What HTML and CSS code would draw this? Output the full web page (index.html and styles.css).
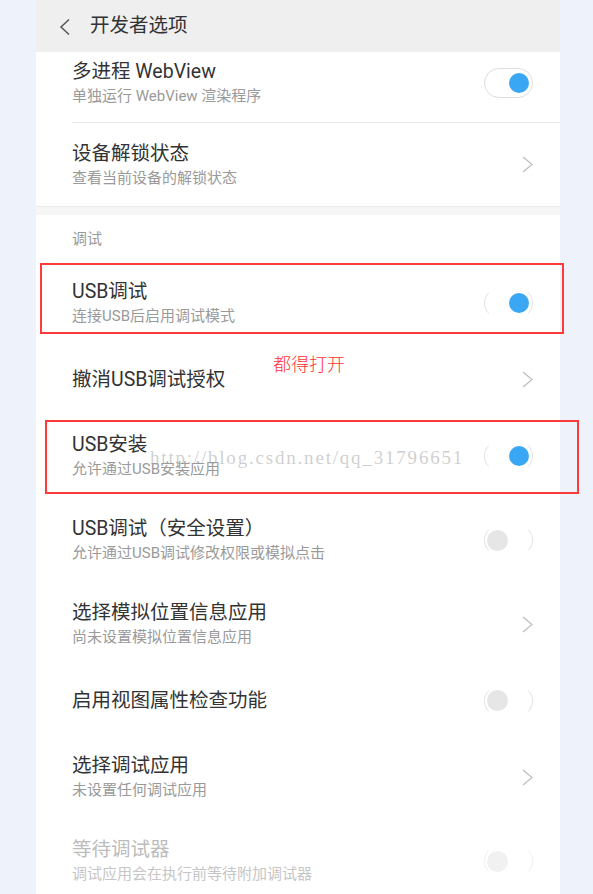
FILE: index.html
```html
<!DOCTYPE html>
<html lang="zh-CN">
<head>
    <meta charset="UTF-8">
    <meta name="viewport" content="width=device-width, initial-scale=1.0">
    <title>开发者选项</title>
    <link rel="stylesheet" href="styles.css">
</head>
<body>
    <div class="panel">
        <header class="topbar">
            <svg class="back" width="12" height="18" viewBox="0 0 12 18">
                <polyline points="10,1.5 2,9 10,16.5" fill="none" stroke="#555" stroke-width="1.5"/>
            </svg>
            <h1>开发者选项</h1>
        </header>

        <div class="row first line">
            <div class="text">
                <div class="name">多进程 WebView</div>
                <div class="desc">单独运行 WebView 渲染程序</div>
            </div>
            <span class="switch on full"><i></i></span>
        </div>
        <div class="row second">
            <div class="text">
                <div class="name">设备解锁状态</div>
                <div class="desc">查看当前设备的解锁状态</div>
            </div>
            <svg class="arrow" width="11" height="17" viewBox="0 0 11 17">
                <polyline points="1,1 10,8.5 1,16" fill="none" stroke="#bdbdbd" stroke-width="1.2"/>
            </svg>
        </div>

        <div class="gap"></div>

        <!-- 调试 -->
        <div class="section-title">调试</div>

        <div class="row">
            <div class="text">
                <div class="name">USB调试</div>
                <div class="desc">连接USB后启用调试模式</div>
            </div>
            <span class="switch on"><i></i></span>
        </div>
        <div class="row single">
            <div class="text">
                <div class="name">撤消USB调试授权</div>
            </div>
            <svg class="arrow" width="11" height="17" viewBox="0 0 11 17">
                <polyline points="1,1 10,8.5 1,16" fill="none" stroke="#bdbdbd" stroke-width="1.2"/>
            </svg>
        </div>
        <div class="row">
            <div class="text">
                <div class="name">USB安装</div>
                <div class="desc">允许通过USB安装应用</div>
            </div>
            <span class="switch on"><i></i></span>
        </div>
        <div class="row">
            <div class="text">
                <div class="name">USB调试（安全设置）</div>
                <div class="desc">允许通过USB调试修改权限或模拟点击</div>
            </div>
            <span class="switch"><i></i></span>
        </div>
        <div class="row">
            <div class="text">
                <div class="name">选择模拟位置信息应用</div>
                <div class="desc">尚未设置模拟位置信息应用</div>
            </div>
            <svg class="arrow" width="11" height="17" viewBox="0 0 11 17">
                <polyline points="1,1 10,8.5 1,16" fill="none" stroke="#bdbdbd" stroke-width="1.2"/>
            </svg>
        </div>
        <div class="row single">
            <div class="text">
                <div class="name">启用视图属性检查功能</div>
            </div>
            <span class="switch"><i></i></span>
        </div>
        <div class="row">
            <div class="text">
                <div class="name">选择调试应用</div>
                <div class="desc">未设置任何调试应用</div>
            </div>
            <svg class="arrow" width="11" height="17" viewBox="0 0 11 17">
                <polyline points="1,1 10,8.5 1,16" fill="none" stroke="#bdbdbd" stroke-width="1.2"/>
            </svg>
        </div>
        <div class="row disabled">
            <div class="text">
                <div class="name">等待调试器</div>
                <div class="desc">调试应用会在执行前等待附加调试器</div>
            </div>
            <span class="switch"><i></i></span>
        </div>
    </div>

    <!-- annotations drawn over the screenshot -->
    <div class="mark box-one"></div>
    <div class="mark box-two"></div>
    <div class="note">都得打开</div>
    <div class="watermark">http://blog.csdn.net/qq_31796651</div>
</body>
</html>
```

FILE: styles.css
```css
/* General */
html, body {
    height: 894px;
    overflow: hidden;
}

body {
    margin: 0;
    background: #eef2fa;
    font-family: Roboto, "Noto Sans CJK SC", sans-serif;
    color: #333;
}

.panel {
    width: 524px;
    margin-left: 36px;
    background: #fff;
    min-height: 894px;
}

/* Top bar */
.topbar {
    height: 52px;
    background: #efefef;
    display: flex;
    align-items: center;
    padding-left: 23px;
}

.back {
    margin-top: 1px;
}

.topbar h1 {
    margin: 0 0 0 19px;
    font-size: 19.5px;
    font-weight: normal;
    color: #333;
    line-height: 24px;
}

/* Rows */
.row {
    display: flex;
    align-items: center;
    justify-content: space-between;
    height: 84px;
    margin-left: 36px;
    padding-right: 27px;
    box-sizing: border-box;
}

.row.single {
    height: 69px;
}

.row.first {
    height: 71px;
    padding-bottom: 8px;
}

.row.second {
    height: 83px;
}

.row.line {
    border-bottom: 1px solid #e6e6e6;
}

.name {
    font-size: 19.5px;
    line-height: 24px;
    color: #333;
}

.desc {
    font-size: 15px;
    line-height: 20px;
    color: #9a9a9a;
    margin-top: 2px;
}

.disabled .name {
    color: #bcbcbc;
}

.disabled .desc {
    color: #c6c6c6;
}

/* Section gap */
.gap {
    height: 8px;
    background: #f6f6f6;
    border-top: 1px solid #ebebeb;
}

.section-title {
    height: 46px;
    box-sizing: border-box;
    padding: 14px 0 0 36px;
    font-size: 15px;
    line-height: 20px;
    color: #9a9a9a;
}

/* Switches */
.switch {
    width: 49px;
    height: 30px;
    box-sizing: border-box;
    border: 1px solid #e4e4e4;
    border-top-color: transparent;
    border-bottom-color: transparent;
    border-radius: 15px;
    display: flex;
    align-items: center;
    padding: 0 2px;
    background: #fff;
}

.switch i {
    width: 21px;
    height: 21px;
    border-radius: 50%;
    background: #e6e6e6;
}

.switch.on {
    justify-content: flex-end;
    padding-right: 3px;
}

.switch.on i {
    width: 20px;
    height: 20px;
    background: #3aa7f4;
}

.switch.full {
    border-color: #dedede;
}

.disabled .switch {
    border-color: transparent #f0f0f0;
}

.disabled .switch i {
    background: #f1f1f1;
}

/* Annotations */
.mark {
    position: absolute;
    border: 2px solid #ff3a3a;
    box-sizing: border-box;
}

.box-one {
    left: 40px;
    top: 263px;
    width: 524px;
    height: 71px;
}

.box-two {
    left: 45px;
    top: 420px;
    width: 534px;
    height: 74px;
}

.note {
    position: absolute;
    left: 273px;
    top: 353px;
    font-family: "Noto Sans CJK SC", sans-serif;
    font-weight: 300;
    font-size: 18px;
    line-height: 20px;
    color: #ff3333;
}

.watermark {
    position: absolute;
    left: 150px;
    top: 447px;
    font-family: "Liberation Serif", serif;
    font-size: 19px;
    line-height: 22px;
    letter-spacing: 1.8px;
    color: rgba(160, 160, 160, 0.5);
}
```
